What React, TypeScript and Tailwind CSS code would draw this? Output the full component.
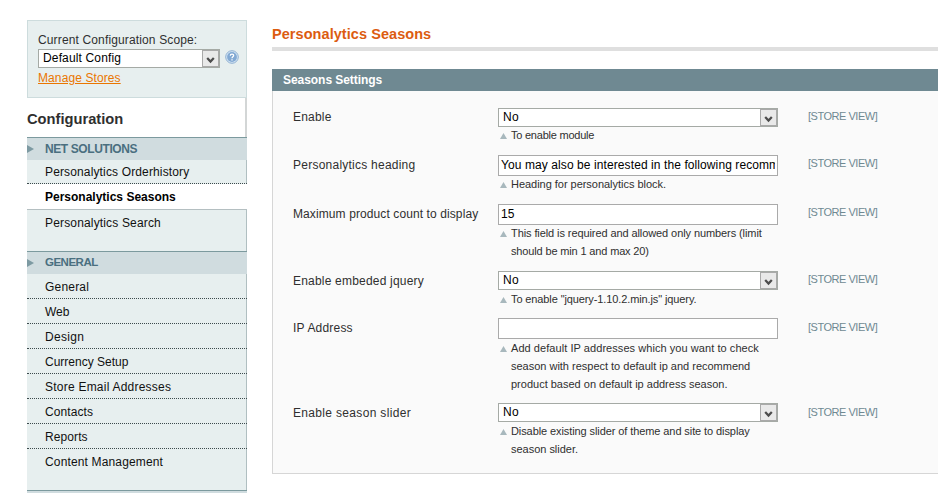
import React from "react";

type MenuItem = { label: string; tracking: string; active?: boolean; box: string };

const netItems: MenuItem[] = [
  { label: "Personalytics Orderhistory", tracking: "tracking-[0.14px]", box: "h-6 border-b border-dotted border-[#3c4a4c]" },
  { label: "Personalytics Seasons", tracking: "tracking-[0px]", active: true, box: "h-[26px] border-b border-[#b4bfc1] bg-white" },
  { label: "Personalytics Search", tracking: "tracking-[0.16px]", box: "h-[26px]" },
];

const dotted = "h-[25px] border-b border-dotted border-[#3c4a4c] pt-[2px]";

const generalItems: MenuItem[] = [
  { label: "General", tracking: "tracking-[0.2px]", box: dotted },
  { label: "Web", tracking: "tracking-[0px]", box: dotted },
  { label: "Design", tracking: "tracking-[0.3px]", box: dotted },
  { label: "Currency Setup", tracking: "tracking-[0px]", box: dotted },
  { label: "Store Email Addresses", tracking: "tracking-[0.23px]", box: dotted },
  { label: "Contacts", tracking: "tracking-[0.1px]", box: dotted },
  { label: "Reports", tracking: "tracking-[0.1px]", box: dotted },
  { label: "Content Management", tracking: "tracking-[0.15px]", box: "h-[25px]" },
];

type MenuProps = { title: string; titleClass: string; items: MenuItem[]; className: string };

function Menu({ title, titleClass, items, className }: MenuProps) {
  return (
    <section className={`flex flex-col border-t border-[#7c9a9e] ${className}`}>
      <h4 className={`flex h-[22px] shrink-0 items-center bg-[#d0dcdf] font-bold text-[#4a6f7f] ${titleClass}`}>
        <svg width="7" height="8" viewBox="0 0 7 8" className="mr-[11px]">
          <path d="M0 0L7 4L0 8Z" fill="#7d9aa2" />
        </svg>
        {title}
      </h4>
      <ul className="flex-1 border-r border-[#b0bfc1]">
        {items.map((item) => (
          <li
            key={item.label}
            className={`-mr-px flex items-center pl-[18px] text-[12px] text-[#111] ${item.box} ${item.tracking} ${item.active ? "font-bold text-black" : ""}`}
          >
            {item.label}
          </li>
        ))}
      </ul>
    </section>
  );
}

function SelectBox({ value, width, tracking = "" }: { value: string; width: string; tracking?: string }) {
  return (
    <div className={`flex h-[19px] items-stretch border border-[#a5aaa5] bg-white text-[12px] text-black ${width}`}>
      <span className={`flex-1 pl-1 leading-[17px] ${tracking}`}>{value}</span>
      <span className="flex w-[17px] items-center justify-center border border-[#a9a9a9] bg-[#e9e9e9]">
        <svg width="9" height="7" viewBox="0 0 9 7" className="mt-[3px]">
          <path d="M1.2 1L4.5 4.6L7.8 1" fill="none" stroke="#4c4c4c" strokeWidth="2.2" />
        </svg>
      </span>
    </div>
  );
}

type NoteLine = { text: string; tracking: string };
type Field = {
  label: string;
  labelClass: string;
  kind: "select" | "input";
  value: string;
  valueTracking: string;
  notes: NoteLine[];
  notesOffset: string;
  scopeOffset: string;
  height: string;
};

const fields: Field[] = [
  {
    label: "Enable", labelClass: "tracking-[0.2px]", kind: "select", value: "No", valueTracking: "tracking-[0.3px]",
    height: "h-[47px]", notesOffset: "-mt-px", scopeOffset: "",
    notes: [{ text: "To enable module", tracking: "tracking-[-0.23px]" }],
  },
  {
    label: "Personalytics heading", labelClass: "mt-px tracking-[0.24px]", kind: "input",
    value: "You may also be interested in the following recomm", valueTracking: "tracking-[0.09px]",
    height: "h-[49px]", notesOffset: "-mt-px", scopeOffset: "",
    notes: [{ text: "Heading for personalytics block.", tracking: "tracking-[-0.03px]" }],
  },
  {
    label: "Maximum product count to display", labelClass: "mt-px tracking-[0.1px]", kind: "input", value: "15", valueTracking: "",
    height: "h-[67px]", notesOffset: "-mt-px", scopeOffset: "",
    notes: [
      { text: "This field is required and allowed only numbers (limit", tracking: "tracking-[-0.09px]" },
      { text: "should be min 1 and max 20)", tracking: "tracking-[-0.15px]" },
    ],
  },
  {
    label: "Enable embeded jquery", labelClass: "mt-px tracking-[0.2px]", kind: "select", value: "No", valueTracking: "tracking-[0.3px]",
    height: "h-[47px]", notesOffset: "mt-0", scopeOffset: "",
    notes: [{ text: 'To enable "jquery-1.10.2.min.js" jquery.', tracking: "tracking-[-0.11px]" }],
  },
  {
    label: "IP Address", labelClass: "mt-px tracking-[0.2px]", kind: "input", value: "", valueTracking: "",
    height: "h-[85px]", notesOffset: "mt-0", scopeOffset: "mt-px",
    notes: [
      { text: "Add default IP addresses which you want to check", tracking: "tracking-[0.06px]" },
      { text: "season with respect to default ip and recommend", tracking: "tracking-[-0.01px]" },
      { text: "product based on default ip address season.", tracking: "tracking-[0px]" },
    ],
  },
  {
    label: "Enable season slider", labelClass: "mt-px tracking-[0.33px]", kind: "select", value: "No", valueTracking: "tracking-[0.3px]",
    height: "h-[70px]", notesOffset: "mt-0", scopeOffset: "mt-px",
    notes: [
      { text: "Disable existing slider of theme and site to display", tracking: "tracking-[-0.09px]" },
      { text: "season slider.", tracking: "tracking-[-0.02px]" },
    ],
  },
];

function FieldRow({ field }: { field: Field }) {
  return (
    <div className={`flex items-start ${field.height}`}>
      <div className={`w-[205px] whitespace-nowrap text-[12px] leading-[18px] text-[#2f2f2f] ${field.labelClass}`}>
        {field.label}
      </div>
      <div className="w-[280px]">
        {field.kind === "select" ? (
          <SelectBox value={field.value} width="w-[280px]" tracking={field.valueTracking} />
        ) : (
          <div className={`h-[21px] border border-[#aaa] bg-white px-[2px] text-[12px] leading-[19px] text-black ${field.valueTracking}`}>
            <div className="overflow-hidden whitespace-nowrap">{field.value}</div>
          </div>
        )}
        <div className={`flex ${field.notesOffset}`}>
          <svg width="7" height="6" viewBox="0 0 7 6" className="ml-[2px] mr-1 mt-[7px] shrink-0">
            <path d="M3.5 0L7 6H0Z" fill="#a8b8bd" />
          </svg>
          <div className="text-[11px] leading-[18px] text-[#2f2f2f]">
            {field.notes.map((line) => (
              <div key={line.text} className={`whitespace-nowrap ${line.tracking}`}>{line.text}</div>
            ))}
          </div>
        </div>
      </div>
      <div className={`ml-[30px] whitespace-nowrap text-[11px] leading-[17px] tracking-[-0.48px] text-[#6f8992] ${field.scopeOffset}`}>
        [STORE VIEW]
      </div>
    </div>
  );
}

export default function App() {
  return (
    <div className="flex h-[493px] w-[938px] overflow-hidden bg-white pl-[27px] pt-5 font-['Liberation_Sans',Arial,sans-serif]">
      <aside className="w-[220px] shrink-0">
        <div className="h-[78px] border border-[#cddcdd] bg-[#e7efef] pl-[10px] pt-[10px] text-[12px] text-[#2f2f2f]">
          <div className="leading-[18px] tracking-[0.14px]">Current Configuration Scope:</div>
          <div className="flex items-center">
            <SelectBox value="Default Config" width="w-[182px]" tracking="tracking-[0.15px]" />
            <svg width="14" height="14" viewBox="0 0 14 14" className="-mt-[3px] ml-[5px]">
              <circle cx="7" cy="7" r="6.3" fill="#d6e6f4" stroke="#8fb0d2" strokeWidth="1" />
              <circle cx="7" cy="7" r="4.9" fill="#82a9d3" />
              <path d="M5.3 5.8C5.3 3.6 8.8 3.7 8.6 5.7C8.5 6.8 7 6.8 7 8.2M7 9.2V10.4" fill="none" stroke="#fff" strokeWidth="1.3" />
            </svg>
          </div>
          <div className="mt-px leading-[18px] text-[#ea7601] underline tracking-[0.1px]">Manage Stores</div>
        </div>
        <div className="flex h-[39px] items-center border-r-2 border-[#d3d6d6] pt-1">
          <h3 className="text-[14.7px] font-bold text-[#2f2f2f]">Configuration</h3>
        </div>
        <div className="bg-[#e7efef]">
          <Menu title="NET SOLUTIONS" titleClass="text-[12px] tracking-[-0.4px]" items={netItems} className="h-[114px]" />
          <Menu title="GENERAL" titleClass="text-[11.5px] tracking-[-0.5px]" items={generalItems} className="h-[239px]" />
          <div className="h-[10px] border-t border-[#7c9a9e] bg-[#d0dcdf]" />
        </div>
      </aside>
      <main className="ml-[25px] w-[666px] shrink-0">
        <h1 className="h-[27px] pt-[5px] text-[14.5px] font-bold leading-[18px] tracking-[0.06px] text-[#dc5c10]">
          Personalytics Seasons
        </h1>
        <div className="h-1 bg-[#dfdfdf]" />
        <h2 className="mt-[18px] h-[22px] bg-[#6f8992] pl-[11px] text-[12px] font-bold leading-[22px] tracking-[-0.05px] text-white">
          Seasons Settings
        </h2>
        <div className="h-[383px] border-b border-l border-[#d6d6d6] bg-[#fafafa] pl-5 pt-[17px]">
          {fields.map((field) => (
            <FieldRow key={field.label} field={field} />
          ))}
        </div>
      </main>
    </div>
  );
}
